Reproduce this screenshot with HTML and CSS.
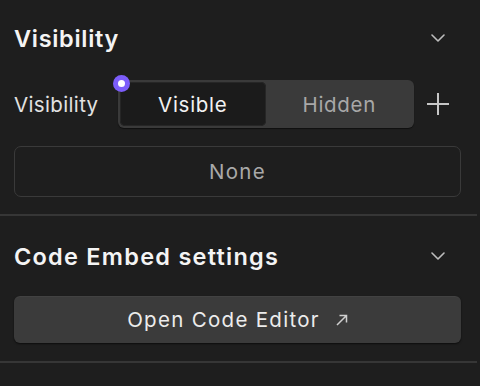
FILE: index.html
```html
<!DOCTYPE html>
<html>
<head>
<meta charset="utf-8">
<link rel="stylesheet" href="styles.css">
</head>
<body>
<div class="panel">
  <section class="section section-first">
    <div class="section-head">
      <h2 class="section-title">Visibility</h2>
      <span class="icon-box">
        <svg width="14" height="8" viewBox="0 0 14 8"><path d="M1 1 L7 7 L13 1" fill="none" stroke="#bdbdbd" stroke-width="1.6" stroke-linecap="round" stroke-linejoin="round"/></svg>
      </span>
    </div>
    <div class="field-row">
      <span class="field-label">Visibility</span>
      <div class="segmented">
        <span class="dot"></span>
        <button class="seg seg-active">Visible</button>
        <button class="seg">Hidden</button>
      </div>
      <span class="icon-box">
        <svg width="22" height="22" viewBox="0 0 22 22"><path d="M11 0 V22 M0 11 H22" stroke="#c6c6c6" stroke-width="2"/></svg>
      </span>
    </div>
    <div class="none-box">None</div>
  </section>
  <section class="section section-second">
    <div class="section-head">
      <h2 class="section-title title-wide">Code Embed settings</h2>
      <span class="icon-box">
        <svg width="14" height="8" viewBox="0 0 14 8"><path d="M1 1 L7 7 L13 1" fill="none" stroke="#bdbdbd" stroke-width="1.6" stroke-linecap="round" stroke-linejoin="round"/></svg>
      </span>
    </div>
    <button class="open-btn">
      <span>Open Code Editor</span>
      <svg width="12" height="12" viewBox="0 0 12 12"><path d="M1 11 L10.5 1.5 M3.5 1.5 H10.5 V8.5" fill="none" stroke="#cfcfcf" stroke-width="1.5"/></svg>
    </button>
  </section>
</div>
</body>
</html>
```
FILE: styles.css
```css
html, body {
  margin: 0;
  padding: 0;
  background: #1e1e1e;
}
body {
  font-family: Inter, "Noto Sans", sans-serif;
  color: #e8e8e8;
  width: 480px;
  height: 386px;
  overflow: hidden;
}
.panel {
  width: 477px;
}
.section {
  padding: 16px 16px 17px 14px;
  border-bottom: 2px solid #363636;
}
.section-second {
  padding: 18px 16px 18px 14px;
}
.section-head {
  display: flex;
  align-items: center;
  justify-content: space-between;
  height: 44px;
}
.section-title {
  margin: 0;
  font-size: 23.5px;
  font-weight: 600;
  color: #f4f4f4;
  letter-spacing: 0.7px;
}
.title-wide {
  letter-spacing: 1.25px;
}
.icon-box {
  width: 47px;
  flex: 0 0 47px;
  display: flex;
  align-items: center;
  justify-content: center;
}
.field-row {
  display: flex;
  align-items: center;
  margin-top: 20px;
  height: 48px;
}
.field-label {
  width: 104px;
  flex: 0 0 104px;
  font-size: 20.5px;
  letter-spacing: 0.35px;
  color: #e2e2e2;
}
.segmented {
  position: relative;
  flex: 1;
  height: 48px;
  box-sizing: border-box;
  display: grid;
  grid-template-columns: 1fr 1fr;
  gap: 1px;
  padding: 2px;
  background: #3a3a3a;
  border-radius: 6px;
  box-shadow: 0 1px 1px rgba(0,0,0,0.5);
}
.seg {
  border: none;
  background: transparent;
  font-family: inherit;
  font-size: 20.5px;
  letter-spacing: 0.7px;
  color: #a8a8a8;
  border-radius: 5px;
  padding: 0;
}
.seg-active {
  background: #1b1b1b;
  color: #f2f2f2;
  box-shadow: inset 0 0 0 1px #262626;
}
.dot {
  position: absolute;
  left: -5px;
  top: -5px;
  width: 17px;
  height: 17px;
  border-radius: 50%;
  background: #7c5dfa;
  display: flex;
  align-items: center;
  justify-content: center;
  z-index: 2;
}
.dot::after {
  content: "";
  width: 7px;
  height: 7px;
  border-radius: 50%;
  background: #ffffff;
}
.none-box {
  margin-top: 18px;
  height: 51px;
  box-sizing: border-box;
  border: 1.5px solid #3a3a3a;
  border-radius: 7px;
  display: flex;
  align-items: center;
  justify-content: center;
  font-size: 20.5px;
  letter-spacing: 1.3px;
  color: #a9a9a9;
}
.open-btn {
  margin-top: 18px;
  width: 100%;
  height: 47px;
  box-sizing: border-box;
  border: none;
  border-radius: 6px;
  background: #3b3b3b;
  box-shadow: 0 1px 2px rgba(0,0,0,0.6), inset 0 1px 0 rgba(255,255,255,0.04);
  display: flex;
  align-items: center;
  justify-content: center;
  gap: 16px;
  font-family: inherit;
  font-size: 20.5px;
  letter-spacing: 1.3px;
  color: #ececec;
  padding: 0;
}
```
